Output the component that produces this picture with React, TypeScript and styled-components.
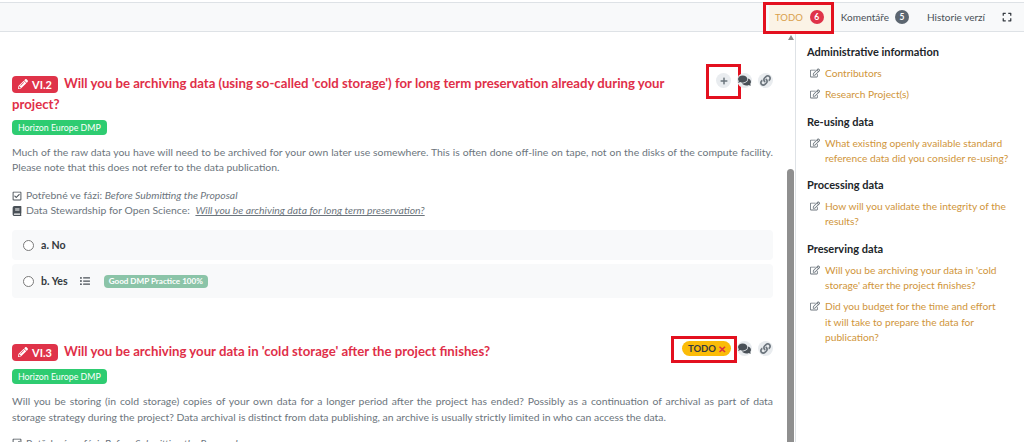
import React from "react";
import styled, { createGlobalStyle } from "styled-components";
import { FaBook, FaComments, FaExpand, FaLink, FaListUl, FaPencilAlt, FaPlus, FaRegCheckSquare, FaRegEdit } from "react-icons/fa";

const Global = createGlobalStyle`
  html, body { margin: 0; padding: 0; height: 442px; overflow: hidden; background: #fff; }
  body { font-family: "Lato", "Noto Sans", sans-serif; font-size: 10.4px; color: #343a40; }
  #root { height: 442px; }
`;

const Page = styled.div`
  height: 442px;
  display: flex;
  flex-direction: column;
  overflow: hidden;
`;
const TopBar = styled.div`
  height: 28px;
  flex: none;
  margin-top: 2px;
  border-top: 1px solid #dee2e6;
  border-bottom: 1px solid #dee2e6;
  background: #f8f9fa;
  display: flex;
  justify-content: flex-end;
  align-items: stretch;
  padding-right: 12px;
`;
const Tab = styled.div<{ $active?: boolean }>`
  position: relative;
  display: flex;
  align-items: center;
  gap: ${(p) => (p.$active ? 7 : 6)}px;
  padding: ${(p) => (p.$active ? "0 8px 0 6px" : "0 9px")};
  color: ${(p) => (p.$active ? "#d9a04b" : "#495057")};
  background: ${(p) => (p.$active ? "#fbf3e6" : "transparent")};
  font-size: ${(p) => (p.$active ? 9.5 : 10)}px;
`;
const Count = styled.span<{ $bg: string }>`
  width: 14px;
  height: 14px;
  border-radius: 50%;
  background: ${(p) => p.$bg};
  color: #fff;
  font-size: 8.5px;
  font-weight: 700;
  display: flex;
  align-items: center;
  justify-content: center;
`;
const ExpandBtn = styled.div`
  display: flex;
  align-items: center;
  margin-left: 8px;
  color: #343a40;
  font-size: 10px;
`;
const Mark = styled.div<{ $w: number; $h: number; $t: number; $l: number }>`
  position: absolute;
  width: ${(p) => p.$w}px;
  height: ${(p) => p.$h}px;
  top: ${(p) => p.$t}px;
  left: ${(p) => p.$l}px;
  border: 3px solid #e3101f;
  box-sizing: border-box;
  pointer-events: none;
`;
const Body = styled.div`
  flex: 1;
  display: flex;
  min-height: 0;
`;
const Main = styled.div`
  width: 786px;
  flex: none;
  overflow: hidden;
  box-sizing: border-box;
  padding: 41px 13px 0 12px;
`;
const Track = styled.div`
  width: 9px;
  flex: none;
  display: flex;
  flex-direction: column;
  align-items: center;
`;
const Arrow = styled.div`
  margin-top: 3px;
  width: 0;
  height: 0;
  border-left: 3.5px solid transparent;
  border-right: 3.5px solid transparent;
  border-bottom: 5px solid #8a8a8a;
`;
const Thumb = styled.div`
  margin-top: 129px;
  width: 7px;
  flex: 1;
  border-radius: 4px 4px 0 0;
  background: #8f8f8f;
`;
const Side = styled.aside`
  flex: 1;
  border-left: 1px solid #dee2e6;
  padding: 12px 2px 0 11px;
  overflow: hidden;
`;
const SideTitle = styled.div`
  font-weight: 700;
  font-size: 11px;
  line-height: 15px;
  color: #212529;
  margin-bottom: 7px;
`;
const SideGroup = styled.div`
  margin-bottom: 11px;
`;
const SideLink = styled.div`
  display: flex;
  gap: 5px;
  padding-left: 3px;
  font-size: 10.2px;
  line-height: 15.3px;
  color: #d0953a;
  margin-bottom: 6px;
  white-space: pre-line;
  svg { flex: none; color: #6c757d; font-size: 10px; margin-top: 2px; }
`;
const Question = styled.section`
  margin-bottom: 43px;
`;
const TitleRow = styled.div`
  display: flex;
  justify-content: space-between;
  align-items: flex-start;
`;
const Title = styled.h2`
  margin: 0;
  width: 670px;
  color: #df2f49;
  font-size: 13.2px;
  font-weight: 700;
  line-height: 21px;
`;
const Code = styled.span`
  display: inline-flex;
  align-items: center;
  gap: 4px;
  height: 17px;
  padding: 0 6px;
  margin-right: 6px;
  border-radius: 4px;
  background: #df3349;
  color: #fff;
  font-size: 11px;
  font-weight: 700;
  vertical-align: -1px;
`;
const Actions = styled.div`
  display: flex;
  gap: 6px;
  align-items: center;
`;
const Round = styled.span`
  position: relative;
  width: 15px;
  height: 15px;
  border-radius: 50%;
  background: #e9ecef;
  color: #6c757d;
  font-size: 8px;
  display: flex;
  align-items: center;
  justify-content: center;
`;
const ChatIcon = styled(FaComments)`
  color: #495057;
  font-size: 13px;
`;
const LinkIcon = styled(FaLink)`
  color: #6c757d;
  font-size: 11px;
`;
const TodoPill = styled.span`
  position: relative;
  height: 15px;
  padding: 0 5px 0 6px;
  border-radius: 8px;
  background: #fbbc08;
  color: #343a40;
  font-size: 9.5px;
  font-weight: 700;
  display: flex;
  align-items: center;
  gap: 2px;
`;
const Cross = styled.span`
  color: #e0323f;
  font-size: 10px;
`;
const Tag = styled.div<{ $mt: number }>`
  display: block;
  width: fit-content;
  height: 15px;
  line-height: 15px;
  padding: 0 6px;
  margin-top: ${(p) => p.$mt}px;
  border-radius: 4px;
  background: #2ecc71;
  color: #fff;
  font-size: 8.8px;
`;
const Text = styled.p`
  margin: 10px 0 0;
  color: #6c757d;
  font-size: 10.4px;
  line-height: 15.2px;
  text-align: justify;
`;
const Meta = styled.div<{ $mt: number }>`
  margin-top: ${(p) => p.$mt}px;
  color: #6c757d;
  font-size: 10.4px;
  line-height: 15px;
`;
const MetaRow = styled.div`
  display: flex;
  align-items: center;
  gap: 4px;
  u { margin-left: 3px; font-style: italic; }
  svg { color: #495057; font-size: 10px; }
`;
const Answer = styled.div<{ $h: number }>`
  margin-top: 4px;
  height: ${(p) => p.$h}px;
  border-radius: 4px;
  background: #f8f9fa;
  display: flex;
  align-items: center;
  padding-left: 11px;
  color: #343a40;
  font-weight: 700;
  font-size: 10.6px;
  &:first-of-type { margin-top: 12px; }
`;
const Radio = styled.span`
  width: 9px;
  height: 9px;
  border: 1px solid #7a7a7a;
  border-radius: 50%;
  margin-right: 7px;
  background: #fff;
`;
const ListIcon = styled(FaListUl)`
  margin-left: 12px;
  color: #495057;
  font-size: 10px;
`;
const Practice = styled.span`
  margin-left: 14px;
  height: 13px;
  line-height: 13px;
  padding: 0 5px;
  border-radius: 4px;
  background: #8bc4a8;
  color: #fff;
  font-size: 8.1px;
  font-weight: 700;
`;
const Answers = styled.div``;

const sidebar: [string, string[]][] = [
  ["Administrative information", ["Contributors", "Research Project(s)"]],
  ["Re-using data", ["What existing openly available standard\nreference data did you consider re-using?"]],
  ["Processing data", ["How will you validate the integrity of the\nresults?"]],
  ["Preserving data", ["Will you be archiving your data in 'cold\nstorage' after the project finishes?", "Did you budget for the time and effort\nit will take to prepare the data for\npublication?"]],
];

export default function App() {
  return (
    <Page>
      <Global />
      <TopBar>
        <Tab $active>
          TODO <Count $bg="#df3349">6</Count>
          <Mark $w={71} $h={32} $t={-1} $l={-6} />
        </Tab>
        <Tab>Komentáře <Count $bg="#5c6670">5</Count></Tab>
        <Tab>Historie verzí</Tab>
        <ExpandBtn><FaExpand /></ExpandBtn>
      </TopBar>
      <Body>
        <Main>
          <Question>
            <TitleRow>
              <Title>
                <Code><FaPencilAlt size={10} /> VI.2</Code>
                Will you be archiving data (using so-called 'cold storage') for long term preservation already during your project?
              </Title>
              <Actions>
                <Round><FaPlus /><Mark $w={35} $h={35} $t={-9} $l={-10} /></Round>
                <Round><ChatIcon /></Round>
                <Round><LinkIcon /></Round>
              </Actions>
            </TitleRow>
            <Tag $mt={5}>Horizon Europe DMP</Tag>
            <Text>
              Much of the raw data you have will need to be archived for your own later use somewhere. This is often done off-line on tape, not on the disks of the compute facility. Please note that this does not refer to the data publication.
            </Text>
            <Meta $mt={13}>
              <MetaRow><FaRegCheckSquare /><span>Potřebné ve fázi: <i>Before Submitting the Proposal</i></span></MetaRow>
              <MetaRow><FaBook /><span>Data Stewardship for Open Science: <u>Will you be archiving data for long term preservation?</u></span></MetaRow>
            </Meta>
            <Answers>
              <Answer $h={30}><Radio />a. No</Answer>
              <Answer $h={34}><Radio />b. Yes<ListIcon /><Practice>Good DMP Practice 100%</Practice></Answer>
            </Answers>
          </Question>
          <Question>
            <TitleRow>
              <Title>
                <Code><FaPencilAlt size={10} /> VI.3</Code>
                Will you be archiving your data in 'cold storage' after the project finishes?
              </Title>
              <Actions>
                <TodoPill>TODO <Cross>✕</Cross><Mark $w={66} $h={27} $t={-5} $l={-11} /></TodoPill>
                <Round><ChatIcon /></Round>
                <Round><LinkIcon /></Round>
              </Actions>
            </TitleRow>
            <Tag $mt={7}>Horizon Europe DMP</Tag>
            <Text>
              Will you be storing (in cold storage) copies of your own data for a longer period after the project has ended? Possibly as a continuation of archival as part of data storage strategy during the project? Data archival is distinct from data publishing, an archive is usually strictly limited in who can access the data.
            </Text>
            <Meta $mt={11}>
              <MetaRow><FaRegCheckSquare /><span>Potřebné ve fázi: <i>Before Submitting the Proposal</i></span></MetaRow>
            </Meta>
          </Question>
        </Main>
        <Track><Arrow /><Thumb /></Track>
        <Side>
          {sidebar.map(([t, links]) => (
            <SideGroup key={t}>
              <SideTitle>{t}</SideTitle>
              {links.map((l) => (
                <SideLink key={l}><FaRegEdit /><span>{l}</span></SideLink>
              ))}
            </SideGroup>
          ))}
        </Side>
      </Body>
    </Page>
  );
}
